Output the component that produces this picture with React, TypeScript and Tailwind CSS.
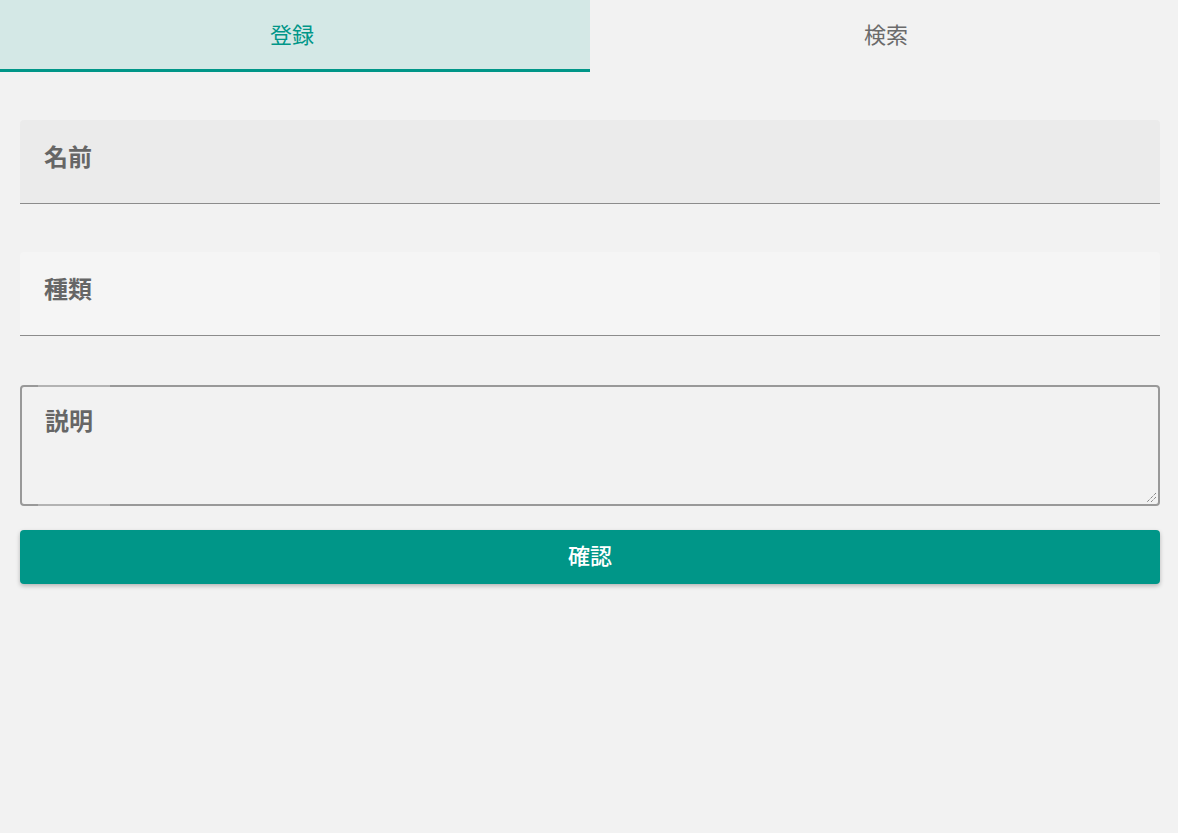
import { useState } from 'react'

const font = { fontFamily: '"Noto Sans CJK JP", "Noto Sans", sans-serif' }

export default function App() {
  const [tab, setTab] = useState(0)

  return (
    <div className="min-h-[833px] w-full bg-[#f2f2f2]" style={font}>
      {/* Tabs */}
      <div className="flex h-[72px]">
        <button
          onClick={() => setTab(0)}
          className={
            tab === 0
              ? 'w-[590px] flex items-center justify-center bg-[#d4e8e6] border-b-[3px] border-[#009688] text-[22px] text-[#009688] pr-[6px] pb-[2px]'
              : 'w-[590px] flex items-center justify-center border-b-[3px] border-transparent text-[22px] text-[#6b6b6b] pr-[6px] pb-[2px]'
          }
        >
          登録
        </button>
        <button
          onClick={() => setTab(1)}
          className={
            tab === 1
              ? 'flex-1 flex items-center justify-center bg-[#d4e8e6] border-b-[3px] border-[#009688] text-[22px] text-[#009688] pl-[4px] pb-[2px]'
              : 'flex-1 flex items-center justify-center border-b-[3px] border-transparent text-[22px] text-[#6b6b6b] pl-[4px] pb-[2px]'
          }
        >
          検索
        </button>
      </div>

      {/* Form */}
      <div className="pl-5 pr-[18px] pt-12 flex flex-col">
        <div className="h-[84px] rounded-t bg-[#ebebeb] border-b border-[#8c8c8c] flex items-center px-6 pb-[12px]">
          <span className="text-[24px] font-bold text-[#666666]">名前</span>
        </div>

        <div className="mt-12 h-[84px] rounded-t bg-[#f5f5f5] border-b border-[#8c8c8c] flex items-center px-6 pb-[12px]">
          <span className="text-[24px] font-bold text-[#666666]">種類</span>
        </div>

        <div className="relative mt-[49px] h-[121px] rounded border-2 border-[#999999] pl-[23px] pt-[15px]">
          <span className="text-[24px] font-bold text-[#666666]">説明</span>
          {/* label notch */}
          <span className="absolute -top-[2px] left-[16px] w-[72px] h-[2px] bg-[#b3b3b3]" />
          <span className="absolute -bottom-[2px] left-[16px] w-[72px] h-[2px] bg-[#b3b3b3]" />
          <svg className="absolute right-[1px] bottom-[1px]" width="12" height="12" viewBox="0 0 12 12">
            <path d="M11 2L2 11M11 6L6 11" stroke="#555" strokeWidth="1" strokeDasharray="1 1" />
          </svg>
        </div>

        <button className="mt-[24px] h-[54px] rounded bg-[#009688] text-white text-[22px] font-medium pb-[5px] shadow-[0_2px_4px_rgba(0,0,0,0.25)]">
          確認
        </button>
      </div>
    </div>
  )
}
